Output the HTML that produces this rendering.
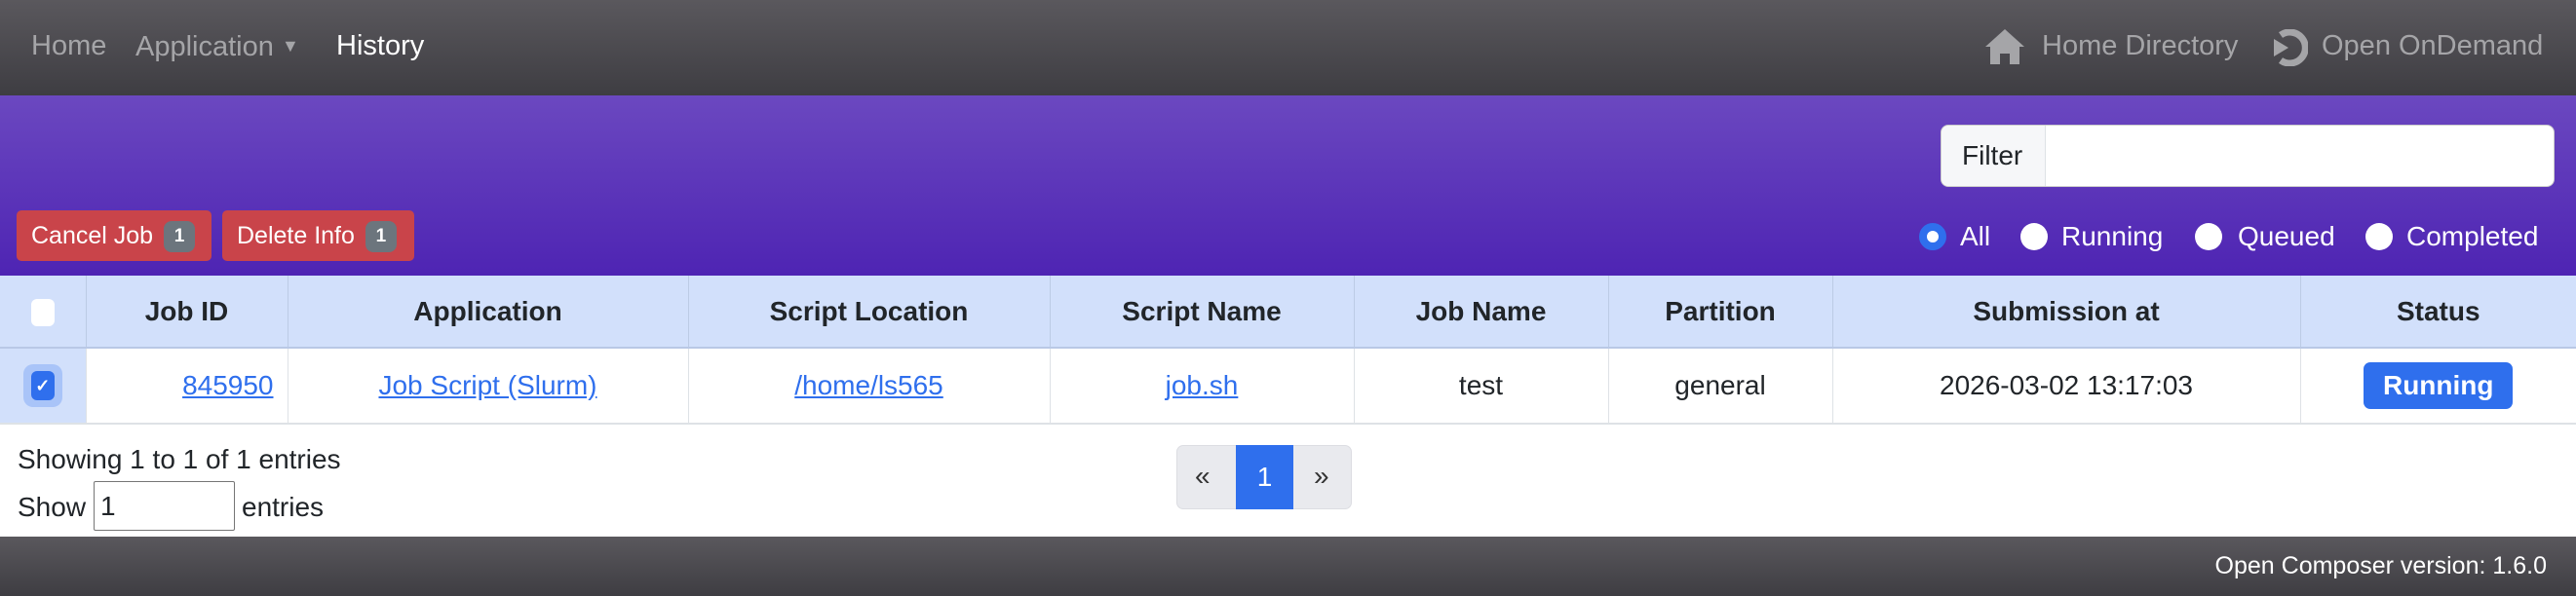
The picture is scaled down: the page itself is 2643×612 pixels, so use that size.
<!DOCTYPE html>
<html><head><meta charset="utf-8"><style>
*{box-sizing:border-box;margin:0;padding:0}
body{width:2643px;height:612px;overflow:hidden;font-family:"Liberation Sans",sans-serif;font-size:28px;color:#212529;background:#fff;position:relative}
.abs{position:absolute}
#nav{left:0;top:0;width:2643px;height:98px;background:linear-gradient(#5a585d,#3e3d42)}
.nl{position:absolute;top:30px;font-size:29px;color:#a5a5a8;line-height:34px;white-space:nowrap}
#pur{left:0;top:98px;width:2643px;height:185px;background:linear-gradient(#6b48c0,#4e24b3)}
.btn{position:absolute;top:216px;height:52px;background:#c9444a;color:#fff;border-radius:5px;font-size:25px;line-height:52px;padding-left:15px}
.bdg{display:inline-block;background:#6c757d;border-radius:8px;font-size:19px;line-height:32px;height:32px;width:32px;text-align:center;font-weight:bold;vertical-align:2px;margin-left:4px}
.rad{position:absolute;top:229px;width:28px;height:28px;border-radius:50%;background:#fff}
.rl{position:absolute;top:226px;color:#fff;font-size:28px;line-height:34px}
table{position:absolute;left:0;top:283px;width:2643px;border-collapse:collapse}
th,td{text-align:center;border-left:1px solid #dee2e6;white-space:nowrap}
th{background:#d2e0fb;height:74px;font-weight:bold;border-bottom:2px solid #b9c8e6;border-left-color:#bccbe5}
td{height:78px;border-bottom:2px solid #dee2e6}
a{color:#2f6fed;text-decoration:underline}
#foot{left:0;top:551px;width:2643px;height:61px;background:linear-gradient(#5a585d,#3e3d42)}
</style></head><body>
<div id="nav" class="abs">
<span class="nl" style="left:32px">Home</span>
<span class="nl" style="left:139px">Application <span style="font-size:18px;vertical-align:4px">▼</span></span>
<span class="nl" style="left:345px;color:#fff">History</span>
<svg class="abs" style="left:2036px;top:29px" width="42" height="38" viewBox="0 0 42 38"><path d="M21 1 L41 19 L36 19 L36 37 L26 37 L26 26 L16 26 L16 37 L6 37 L6 19 L1 19 Z" fill="#a5a5a8"/></svg>
<span class="nl" style="left:2095px">Home Directory</span>
<svg class="abs" style="left:2328px;top:30px" width="40" height="38" viewBox="0 0 40 38"><path d="M12 6 A16 16 0 1 1 12 32" stroke="#a5a5a8" stroke-width="7" fill="none"/><path d="M5 10 L20 19 L5 28 Z" fill="#a5a5a8"/></svg>
<span class="nl" style="left:2382px">Open OnDemand</span>
</div>
<div id="pur" class="abs"></div>
<div class="btn" style="left:17px;width:200px">Cancel Job <span class="bdg">1</span></div>
<div class="btn" style="left:228px;width:197px">Delete Info <span class="bdg">1</span></div>
<div class="abs" style="left:1991px;top:128px;width:630px;height:64px;background:#fff;border-radius:8px;border:1px solid #ccc"></div>
<div class="abs" style="left:1992px;top:129px;width:107px;height:62px;background:#f6f7f9;border-right:1px solid #dee2e6;border-radius:8px 0 0 8px;font-size:28px;line-height:62px;padding-left:21px">Filter</div>
<div class="rad" style="left:1969px;border:8px solid #2f6fed"></div><span class="rl" style="left:2011px">All</span>
<div class="rad" style="left:2073px"></div><span class="rl" style="left:2115px">Running</span>
<div class="rad" style="left:2252px"></div><span class="rl" style="left:2296px">Queued</span>
<div class="rad" style="left:2427px"></div><span class="rl" style="left:2469px">Completed</span>
<table>
<tr><th style="width:88px;border-left:none"><span style="display:inline-block;width:24px;height:28px;background:#fff;border-radius:6px;vertical-align:middle"></span></th><th style="width:207px">Job ID</th><th style="width:411px">Application</th><th style="width:371px">Script Location</th><th style="width:312px">Script Name</th><th style="width:261px">Job Name</th><th style="width:230px">Partition</th><th style="width:480px">Submission at</th><th>Status</th></tr>
<tr><td style="background:#d2e0fb;border-left:none"><span style="display:inline-block;width:40px;height:44px;border-radius:10px;background:#a9c4f8;vertical-align:middle;padding:7px 8px"><span style="display:block;width:24px;height:30px;border-radius:6px;background:#2f6fed;color:#fff;font-size:18px;line-height:30px;font-weight:bold">✓</span></span></td>
<td style="text-align:right;padding-right:14px"><a>845950</a></td><td><a>Job Script (Slurm)</a></td><td><a>/home/ls565</a></td><td><a>job.sh</a></td><td>test</td><td>general</td><td>2026-03-02 13:17:03</td>
<td><span style="display:inline-block;width:153px;height:48px;line-height:48px;background:#2f6fed;color:#fff;font-weight:bold;border-radius:7px">Running</span></td></tr>
</table>
<div class="abs" style="left:18px;top:455px;line-height:34px">Showing 1 to 1 of 1 entries</div>
<div class="abs" style="left:18px;top:504px;line-height:34px">Show</div>
<div class="abs" style="left:96px;top:494px;width:145px;height:51px;border:1px solid #767676;border-radius:2px;padding-left:6px;line-height:49px">1</div>
<div class="abs" style="left:248px;top:504px;line-height:34px">entries</div>
<div class="abs" style="left:1207px;top:457px;width:180px;height:66px;background:#e9eaee;border:1px solid #dcdde2;border-radius:7px"></div>
<div class="abs" style="left:1226px;top:474px;color:#333;line-height:30px">«</div>
<div class="abs" style="left:1268px;top:457px;width:59px;height:66px;background:#2f6fed;color:#fff;text-align:center;line-height:66px">1</div>
<div class="abs" style="left:1348px;top:474px;color:#333;line-height:30px">»</div>
<div id="foot" class="abs"><span class="abs" style="right:30px;top:15px;color:#fff;font-size:25px;line-height:30px">Open Composer version: 1.6.0</span></div>
</body></html>
